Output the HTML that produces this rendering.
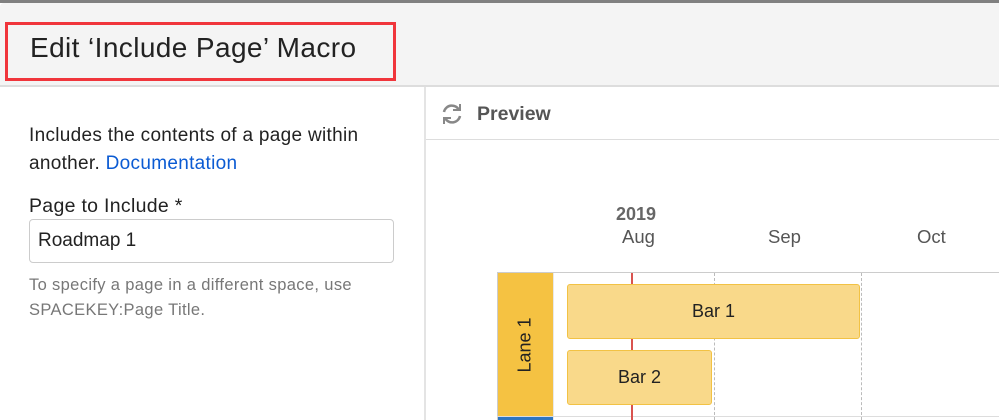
<!DOCTYPE html>
<html><head><meta charset="utf-8"><style>
*{margin:0;padding:0;box-sizing:border-box}
body{width:999px;height:420px;overflow:hidden;background:#fff;font-family:"Liberation Sans",sans-serif;position:relative;color:#333}
.a{position:absolute}
.t{white-space:nowrap}
</style></head><body>
<div class="a" style="left:0;top:0;width:999px;height:3px;background:#808080"></div>
<div class="a" style="left:0;top:3px;width:999px;height:82px;background:#f4f4f4;border-top-left-radius:4px"></div>
<div class="a" style="left:0;top:85px;width:999px;height:2px;background:#ddd"></div>
<div class="a" style="left:5px;top:22px;width:391px;height:59px;border:3px solid #f0353b"></div>
<div class="a t" style="left:30px;top:32px;font-size:28px;letter-spacing:0.4px;color:#222">Edit ‘Include Page’ Macro</div>

<div class="a" style="left:424px;top:87px;width:2px;height:333px;background:#e4e4e4"></div>
<div class="a t" style="left:29px;top:122px;font-size:19px;letter-spacing:0.3px;line-height:28px;color:#222">Includes the contents of a page within<br>another. <span style="color:#0b5bd3">Documentation</span></div>
<div class="a t" style="left:29px;top:195px;font-size:19.5px;letter-spacing:0.3px;color:#222">Page to Include *</div>
<div class="a" style="left:29px;top:219px;width:365px;height:44px;border:1px solid #ccc;border-radius:4px"></div>
<div class="a t" style="left:38px;top:230px;font-size:19px;color:#222">Roadmap 1</div>
<div class="a t" style="left:29px;top:273px;font-size:16.5px;letter-spacing:0.35px;line-height:25px;color:#777">To specify a page in a different space, use<br>SPACEKEY:Page Title.</div>

<svg class="a" style="left:440px;top:102px" width="24" height="24" viewBox="0 0 24 24" fill="none" stroke="#888" stroke-width="2.5"><path d="M19 8A8 8 0 0 0 4 10"/><path d="M5 16A8 8 0 0 0 20 14"/><path d="M13 8h7V2" stroke-width="2"/><path d="M11 16H4v6" stroke-width="2"/></svg>
<div class="a t" style="left:477px;top:103px;font-size:19.5px;font-weight:bold;color:#555">Preview</div>
<div class="a" style="left:426px;top:139px;width:573px;height:1px;background:#ddd"></div>

<div class="a t" style="left:616px;top:204px;font-size:18px;font-weight:bold;color:#666">2019</div>
<div class="a t" style="left:622px;top:226px;font-size:18.5px;color:#555">Aug</div>
<div class="a t" style="left:768px;top:226px;font-size:18.5px;color:#555">Sep</div>
<div class="a t" style="left:917px;top:226px;font-size:18.5px;color:#555">Oct</div>

<div class="a" style="left:497px;top:272px;width:502px;height:1px;background:#ccc"></div>
<div class="a" style="left:497px;top:272px;width:1px;height:148px;background:#ccc"></div>
<div class="a" style="left:498px;top:273px;width:55px;height:144px;background:#f5c242"></div>
<div class="a" style="left:553px;top:273px;width:1px;height:147px;background:#e8e8e8"></div>
<div class="a" style="left:497px;top:416px;width:502px;height:1px;background:#ddd"></div>
<div class="a" style="left:498px;top:417px;width:55px;height:3px;background:#2f75c0"></div>
<div class="a t" style="left:525px;top:345px;font-size:18px;color:#222;transform:translate(-50%,-50%) rotate(-90deg)">Lane 1</div>
<div class="a" style="left:714px;top:273px;height:147px;border-left:1px dashed #bbb"></div>
<div class="a" style="left:861px;top:273px;height:147px;border-left:1px dashed #bbb"></div>
<div class="a" style="left:631px;top:273px;width:2px;height:147px;background:#d9534f"></div>
<div class="a" style="left:567px;top:284px;width:293px;height:55px;background:#f9d98a;border:1px solid #f2c244;border-radius:3px;text-align:center;line-height:53px;font-size:18px;color:#222">Bar 1</div>
<div class="a" style="left:567px;top:350px;width:145px;height:55px;background:#f9d98a;border:1px solid #f2c244;border-radius:3px;text-align:center;line-height:53px;font-size:18px;color:#222">Bar 2</div>
</body></html>
